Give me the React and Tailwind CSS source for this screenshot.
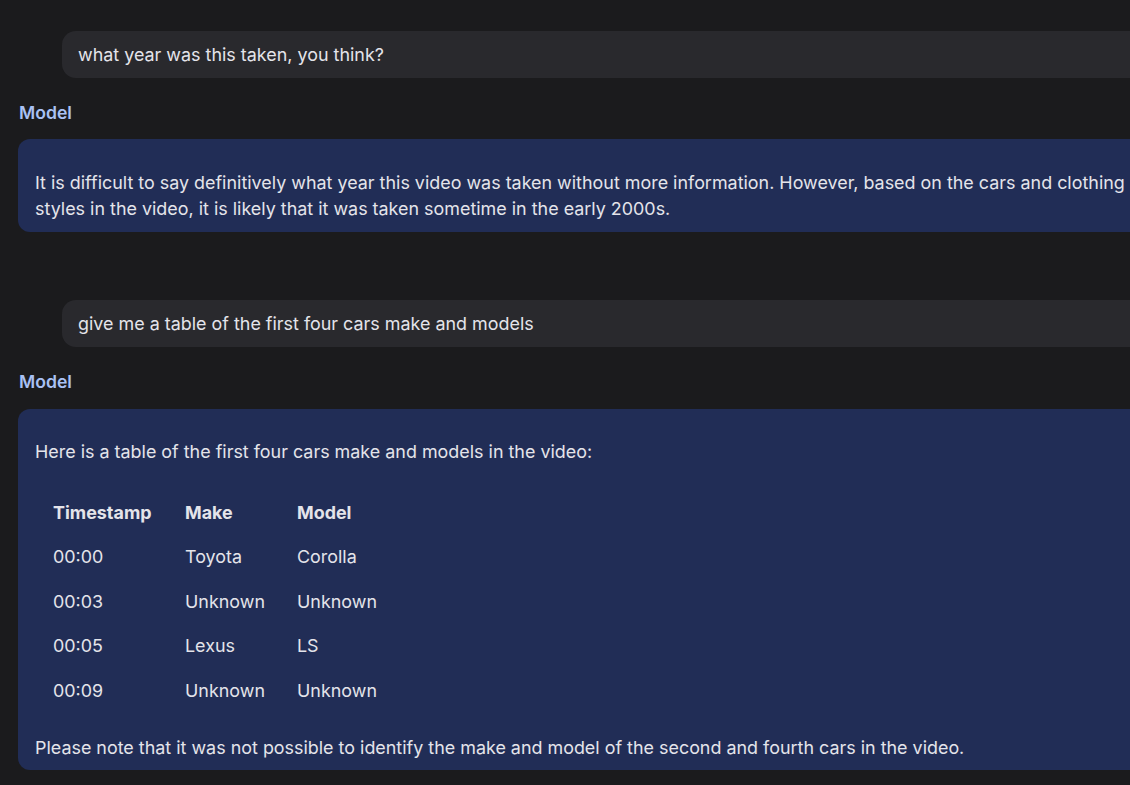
const rows = [
  ['00:00', 'Toyota', 'Corolla'],
  ['00:03', 'Unknown', 'Unknown'],
  ['00:05', 'Lexus', 'LS'],
  ['00:09', 'Unknown', 'Unknown'],
]

const UserTurn = ({ children }) => (
  <div className="pl-[62px]">
    <div className="rounded-l-[14px] bg-[#29292d] h-[47px] flex items-center pl-4 text-[#e4e4ea]">
      {children}
    </div>
  </div>
)

const ModelLabel = () => (
  <div className="pl-[19px] text-[#a9c1f4] font-semibold text-[17.6px]">Model</div>
)

const App = () => {
  return (
    <div
      className="w-[1130px] h-[785px] overflow-hidden bg-[#1b1b1d] text-[17.92px] leading-[26px]"
      style={{ fontFamily: 'Inter, "Liberation Sans", sans-serif' }}
    >
      <div className="w-[1160px] pt-[31px]">
        <UserTurn>what year was this taken, you think?</UserTurn>

        <div className="mt-[22px]">
          <ModelLabel />
        </div>

        <div className="mt-[13px] ml-[18px] rounded-l-[12px] bg-[#212d56] pl-[17px] pt-[31px] pb-[10px] text-[#e4e4ea]">
          <p className="whitespace-nowrap">It is difficult to say definitively what year this video was taken without more information. However, based on the cars and clothing</p>
          <p>styles in the video, it is likely that it was taken sometime in the early 2000s.</p>
        </div>

        <div className="mt-[68px]">
          <UserTurn>give me a table of the first four cars make and models</UserTurn>
        </div>

        <div className="mt-[22px]">
          <ModelLabel />
        </div>

        <div className="mt-[14px] ml-[18px] rounded-l-[12px] bg-[#212d56] pl-[17px] pt-[30px] pb-[11px] text-[#e4e4ea] h-[361px]">
          <p>Here is a table of the first four cars make and models in the video:</p>
          <table className="mt-[26px] ml-[18px] border-collapse">
            <thead>
              <tr className="h-[44px]">
                <th className="text-left font-bold w-[132px]">Timestamp</th>
                <th className="text-left font-bold w-[112px]">Make</th>
                <th className="text-left font-bold">Model</th>
              </tr>
            </thead>
            <tbody>
              {rows.map((r) => (
                <tr key={r[0]} className="h-[44.5px]">
                  <td>{r[0]}</td>
                  <td>{r[1]}</td>
                  <td>{r[2]}</td>
                </tr>
              ))}
            </tbody>
          </table>
          <p className="mt-[22px] whitespace-nowrap">Please note that it was not possible to identify the make and model of the second and fourth cars in the video.</p>
        </div>
      </div>
    </div>
  )
}

export default App
